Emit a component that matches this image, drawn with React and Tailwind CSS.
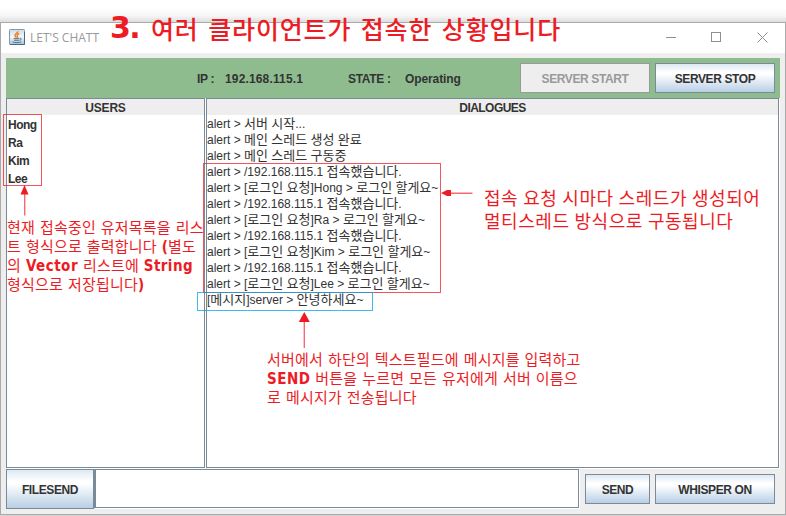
import React from "react";

const SANS = "font-['Liberation_Sans','Noto_Sans_CJK_KR',sans-serif]";
const NOTE = "font-['DejaVu_Sans_Condensed','DejaVu_Sans','Noto_Sans_CJK_KR',sans-serif]";

const users = ["Hong", "Ra", "Kim", "Lee"];
const log = [
  "alert > 서버 시작...",
  "alert > 메인 스레드 생성 완료",
  "alert > 메인 스레드 구동중",
  "alert > /192.168.115.1 접속했습니다.",
  "alert > [로그인 요청]Hong > 로그인 할게요~",
  "alert > /192.168.115.1 접속했습니다.",
  "alert > [로그인 요청]Ra > 로그인 할게요~",
  "alert > /192.168.115.1 접속했습니다.",
  "alert > [로그인 요청]Kim > 로그인 할게요~",
  "alert > /192.168.115.1 접속했습니다.",
  "alert > [로그인 요청]Lee > 로그인 할게요~",
  "[메시지]server > 안녕하세요~",
];

// Hangul runs are set one pixel larger than the Latin text around them.
function LogLine({ text }) {
  return (
    <p className="h-4">
      {text.split(/([가-힣]+)/).map((part, i) =>
        i % 2 ? <span key={i} className="text-[13px] leading-none">{part}</span> : part
      )}
    </p>
  );
}

function Button({ className = "", disabled = false, children }) {
  const look = disabled
    ? "border-[#999] bg-[#eee] text-[#999]"
    : "border-[#7a8a99] bg-[linear-gradient(#dde8f3_0%,#fff_30%,#fff_36%,#b8cfe5_100%)] text-[#333]";
  return (
    <button
      disabled={disabled}
      className={`flex shrink-0 items-center justify-center border pt-0.5 text-[12px] leading-none font-bold tracking-[-0.4px] whitespace-nowrap ${look} ${className}`}
    >
      {children}
    </button>
  );
}

function JavaIcon() {
  return (
    <svg width="16" height="16" viewBox="0 0 16 16" className="-mt-0.5 shrink-0">
      <defs>
        <linearGradient id="cup" x1="0" y1="0" x2="0" y2="1">
          <stop offset="0" stopColor="#cfdbe4" />
          <stop offset="0.5" stopColor="#f4f7f9" />
          <stop offset="1" stopColor="#a9bfcf" />
        </linearGradient>
      </defs>
      <rect x="0.5" y="0.5" width="15" height="15" rx="0.8" fill="url(#cup)" stroke="#7d98ad" />
      <path d="M15.500 3v12.500H1" fill="none" stroke="#466986" />
      <path d="M8.800 2.300C9.300 4 5.700 4.700 6 6.600c.1 1 1.200 1.400 1.400 2.200M10.300 4.500C8.500 5.200 7.700 6 8.500 7.100c.4.6.2 1.100-.3 1.700" fill="none" stroke="#e8862b" strokeWidth="1.500" />
      <path d="M4.600 9.700h5.800M5.200 11.300h4.600M10.800 9.300c2-.4 2 1.500-.3 2M3.600 12.900c2 .9 6.500.9 8.600-.1" fill="none" stroke="#4b7396" strokeWidth="1" />
    </svg>
  );
}

function TitleBar() {
  return (
    <div className="flex h-[30px] shrink-0 items-center bg-white pl-2 text-[#999]">
      <JavaIcon />
      <span className="ml-[5px] font-['Open_Sans','Noto_Sans',sans-serif] text-[12px] tracking-[0]">LET'S CHATT</span>
      <svg width="106" height="12" viewBox="0 0 106 12" className="mr-[16px] -mt-0.5 ml-auto" fill="none" stroke="#8f8f8f" shapeRendering="crispEdges">
        <path d="M3 6.500h10" />
        <rect x="48.500" y="1.500" width="9" height="9" />
        <path d="M94.500 1.500l10 10M104.500 1.500l-10 10" shapeRendering="auto" />
      </svg>
    </div>
  );
}

function Panel({ title, titleClass = "", className, children }) {
  return (
    <section className={`flex flex-col border border-[#7a8a99] bg-white shadow-[1px_1px_0_#fff] ${className}`}>
      <h2 className={`h-4 shrink-0 bg-[#eee] text-center text-[12px] leading-[18px] font-bold ${titleClass}`}>{title}</h2>
      {children}
    </section>
  );
}

function Annotations() {
  return (
    <div className="text-[#ed1c24]">
      <div className="absolute top-[7px] left-[110px] flex items-center font-bold whitespace-nowrap">
        <span className="w-[41px] pt-px font-['DejaVu_Sans',sans-serif] text-[30px] leading-[40px] tracking-[-1.5px]">3.</span>
        <span className="font-['Noto_Sans_CJK_KR',sans-serif] text-[25px] leading-[40px] font-medium tracking-[0.85px] [word-spacing:3px]">여러 클라이언트가 접속한 상황입니다</span>
      </div>

      <div className="absolute top-[114px] left-[3px] h-[72px] w-[39px] border border-[#ed1c24]/75" />
      <div className="absolute top-[163px] left-[203px] h-[130px] w-[238px] border border-[#ed1c24]/75" />
      <div className="absolute top-[292px] left-[197px] h-[19px] w-[176px] border border-[#00a2e8]/75" />

      <svg width="786" height="516" viewBox="0 0 786 516" className="pointer-events-none absolute top-0 left-0" fill="#ed1c24">
        <path d="M24.700 194v21.500M304.300 320v28M450 193.300h22.500" stroke="#ed1c24" strokeOpacity="0.65" strokeWidth="1.400" />
        <path d="M24.500 185l4 9.500h-8zM304.300 312l5.500 10h-11zM441 193l6-3h4v6h-4z" />
      </svg>

      <div className={`absolute top-[219px] left-[7px] ${NOTE} text-[15px] leading-[19px] tracking-[0.2px] whitespace-nowrap [word-spacing:0.4px]`}>
        <p>현재 접속중인 유저목록을 리스</p>
        <p>트 형식으로 출력합니다 <b>(</b>별도</p>
        <p>의 <b className="tracking-[0.5px]">Vector</b> 리스트에 <b className="tracking-[0.4px]">String</b></p>
        <p>형식으로 저장됩니다<b>)</b></p>
      </div>
      <div className={`absolute top-[188px] left-[484px] ${SANS} text-[18px] leading-[23px] tracking-[0.55px] whitespace-nowrap [word-spacing:-0.6px]`}>
        <p>접속 요청 시마다 스레드가 생성되어</p>
        <p>멀티스레드 방식으로 구동됩니다</p>
      </div>
      <div className={`absolute top-[351px] left-[267px] ${NOTE} text-[15px] leading-[19px] tracking-[0.2px] whitespace-nowrap [word-spacing:0.4px]`}>
        <p>서버에서 하단의 텍스트필드에 메시지를 입력하고</p>
        <p><b className="tracking-[0.5px]">SEND</b> 버튼을 누르면 모든 유저에게 서버 이름으</p>
        <p>로 메시지가 전송됩니다</p>
      </div>
    </div>
  );
}

export default function App() {
  return (
    <div className={`relative h-[516px] w-[786px] overflow-hidden bg-[#d4d4d4] text-[#333] ${SANS}`}>
      <div className="h-[22px] bg-[linear-gradient(#fff_35%,#f7f7f7_70%,#dedede_100%)]" />
      <main className="flex h-[493px] w-[786px] flex-col border border-[#aaa] bg-[#eee]">
        <TitleBar />
        <div className="flex flex-1 flex-col px-[5px] pt-[5px]">
          <header className="flex h-10 w-[774px] shrink-0 items-center bg-[#8fbc8f] pr-[5px] pl-[191px] text-[12px] font-bold whitespace-pre">
            <span className="w-7 pt-0.5 tracking-[-0.3px]">IP :</span>
            <span className="w-[123px] pt-0.5 tracking-[0.15px]">192.168.115.1</span>
            <span className="w-[57px] pt-0.5 tracking-[-0.3px]">STATE :</span>
            <span className="pt-0.5 tracking-[-0.1px]">Operating</span>
            <Button disabled className="ml-auto h-[30px] w-[130px]">SERVER START</Button>
            <Button className="ml-[5px] h-[30px] w-[120px]">SERVER STOP</Button>
          </header>
          <div className="flex h-[370px] shrink-0 gap-px">
            <Panel title="USERS" titleClass="tracking-[-0.2px]" className="w-[199px]">
              <ul className="pt-px pl-px text-[12px] leading-[18px] font-bold tracking-[-0.5px]">
                {users.map((u) => <li key={u}>{u}</li>)}
              </ul>
            </Panel>
            <Panel title="DIALOGUES" titleClass="tracking-[-0.55px]" className="w-[573px]">
              <div className="pt-px text-[12px] leading-4 whitespace-nowrap">
                {log.map((line, i) => <LogLine key={i} text={line} />)}
              </div>
            </Panel>
          </div>
          <footer className="mt-px flex h-[39px] shrink-0">
            <Button className="h-[40px] w-[88px]">FILESEND</Button>
            <div className="h-[39px] w-[485px] border border-l-2 border-[#7a8a99] bg-white shadow-[1px_1px_0_#fff]" />
            <Button className="mt-[5px] ml-[6px] h-[30px] w-[65px]">SEND</Button>
            <Button className="mt-[5px] ml-[5px] h-[30px] w-[120px]">WHISPER ON</Button>
          </footer>
        </div>
      </main>
      <Annotations />
    </div>
  );
}
